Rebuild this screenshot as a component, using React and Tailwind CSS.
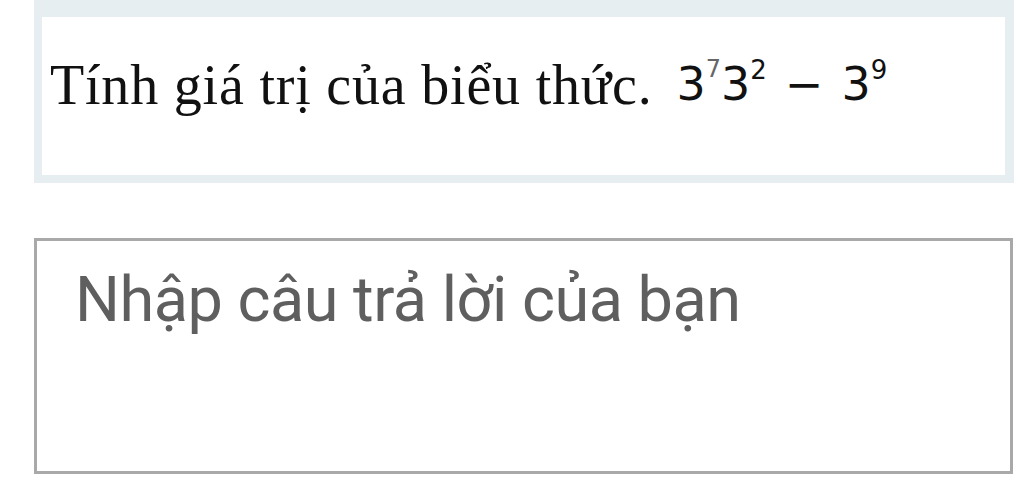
export default function App() {
  return (
    <div className="w-[1024px] h-[492px] bg-white overflow-hidden">
      {/* question panel */}
      <div className="ml-[34px] w-[980px] h-[183px] bg-[#e7eef2] pt-[17px] pl-[8px] pr-[9px] pb-[8px]">
        <div className="h-full bg-white flex items-start pt-[40px] pl-[8px] font-['Liberation_Serif',serif] text-[56px] leading-none text-[#111]">
          <span className="tracking-[0.8px]">Tính giá trị của biểu thức.</span>
          <span className="ml-[24px] mt-[4px] font-['DejaVu_Sans',sans-serif] text-[46px] flex items-start">
            <span>3</span>
            <span className="text-[24px] -mt-[4px] text-[#666]">7</span>
            <span>3</span>
            <span className="text-[26px] -mt-[4px]">2</span>
            <span className="mx-[18px]">−</span>
            <span>3</span>
            <span className="text-[26px] -mt-[4px]">9</span>
          </span>
        </div>
      </div>

      {/* answer box */}
      <div className="mt-[55px] ml-[34px] w-[979px] h-[236px] border-[3px] border-[#a9a9a9] pl-[38px] pt-[27px]">
        <span className="font-['Roboto',sans-serif] text-[63px] leading-none tracking-[-0.5px] text-[#5f5f5f]">
          Nhập câu trả lời của bạn
        </span>
      </div>
    </div>
  );
}
